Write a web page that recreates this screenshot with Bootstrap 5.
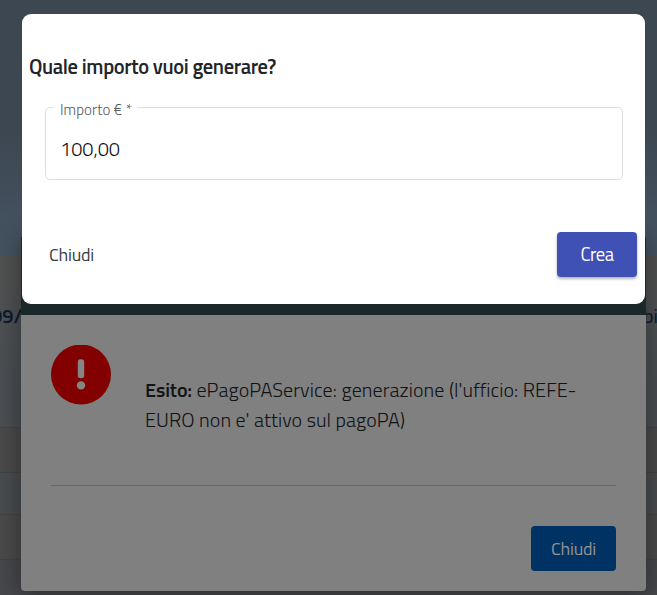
<!DOCTYPE html>
<html lang="it">
<head>
<meta charset="utf-8">
<meta name="viewport" content="width=device-width, initial-scale=1">
<title>Genera importo</title>
<link href="https://cdn.jsdelivr.net/npm/bootstrap@5.3.0/dist/css/bootstrap.min.css" rel="stylesheet">
<style>
body{font-family:"Titillium Web",Roboto,"Open Sans",sans-serif;color:#212529;height:595px;overflow:hidden;background:#505254}
.fit{display:inline-block;white-space:nowrap}
.hero{height:256px;background:linear-gradient(#3c4752 0,#3c4752 130px,#465462 256px)}
.strip{height:171px;background:linear-gradient(#525252,#515253 40px,#4c5053 110px,#4b4f53)}
.strip span{font-size:20px;line-height:24px;margin-top:48px;color:#0d1b31}
.date-end{margin-left:-9px}
.word-start{margin-right:-1px}
.field-row{height:46px;background:#4b4b4b;border-top:1px solid #444;border-bottom:1px solid #444}
.gap-row{height:41px;background:#4a4d4f}
.last-row{height:35px;background:#48494c}
.result{left:21px;top:237px;width:625px;height:354px;border-radius:4px;background:#808080;color:#111315;box-shadow:0 4px 24px 4px rgba(0,0,0,.32)}
.result-head{height:78px;background:#1a2829}
.result-body{padding:30px 30px 20px}
.result-main{height:141px;border-bottom:1px solid #676869}
.result-text{margin:30px 0 0 34px;font-size:20px;line-height:30px;font-weight:300}
.result-text b{font-weight:600}
.btn-close-result{width:85px;height:45px;border-radius:4px;background:#003263;color:#929496;font-size:18px;margin-top:40px}
.ask{left:22px;top:14px;width:623px;height:290px;border-radius:9px;background:#fff}
.ask-title{font-size:20.5px;line-height:28px;margin:39px 0 0 7px;font-weight:600}
.amount{margin:26px 22px 0 23px;height:73px;border:1px solid #dedede;border-radius:5px}
.amount legend{float:none;width:84px;margin:0 0 0 7px;padding:0 0 0 7px;color:#55595d;font-size:15px;line-height:18px;height:1px;font-weight:300}
.amount legend .fit{position:relative;top:-6px}
.amount-value{font-size:20px;line-height:28px;margin:27px 0 0 14px;font-weight:300;color:#0c0e10}
.actions{margin:52px 8px 0 27px}
.plain{font-size:18px;color:#3a3e43;font-weight:400}
.btn-create{width:80px;height:45px;border-radius:4px;background:#3f51b5;color:#fff;font-size:18.5px;font-weight:400;box-shadow:0 2px 3px rgba(0,0,0,.3)}
</style>
</head>
<body>
<div class="hero"></div>
<div class="strip d-flex justify-content-between overflow-hidden"><span class="date-end fw-semibold">09/</span><span class="word-start">bi</span></div>
<div class="field-row"></div><div class="gap-row"></div><div class="field-row"></div><div class="last-row"></div>

<section class="result position-absolute overflow-visible">
  <div class="result-head"></div>
  <div class="result-body">
    <div class="result-main d-flex align-items-start">
      <svg class="flex-shrink-0" width="60" height="60" viewBox="0 0 60 60"><circle cx="30" cy="29.5" r="30" fill="#830000"/><rect x="26.8" y="14.3" width="6.4" height="19" rx="2.7" fill="#858585"/><circle cx="30" cy="40.4" r="4.2" fill="#858585"/></svg>
      <div class="result-text"><div><b class="fit" data-w="47">Esito:</b> <span class="fit" data-w="380">ePagoPAService: generazione (l'ufficio: REFE-</span></div><div><span class="fit" data-w="260">EURO non e' attivo sul pagoPA)</span></div></div>
    </div>
    <div class="d-flex justify-content-end"><button class="btn btn-close-result p-0"><span class="fit" data-w="45">Chiudi</span></button></div>
  </div>
</section>

<section class="ask position-absolute d-flex flex-column">
  <h1 class="ask-title"><span class="fit" data-w="247">Quale importo vuoi generare?</span></h1>
  <fieldset class="amount">
    <legend><span class="fit" data-w="72">Importo € *</span></legend>
    <div class="amount-value"><span class="fit" data-w="60">100,00</span></div>
  </fieldset>
  <div class="actions d-flex justify-content-between align-items-center">
    <span class="plain fit" data-w="45">Chiudi</span>
    <button class="btn btn-create p-0 border-0"><span class="fit" data-w="33">Crea</span></button>
  </div>
</section>
<script src="https://cdn.jsdelivr.net/npm/bootstrap@5.3.0/dist/js/bootstrap.bundle.min.js"></script>
<script>
// Spread each label's tracking over its intended measure.
document.querySelectorAll('.fit').forEach(function(el){
  var d=el.dataset.w-el.getBoundingClientRect().width;
  el.style.letterSpacing=(d/el.textContent.length)+'px';
});
</script>
</body>
</html>
